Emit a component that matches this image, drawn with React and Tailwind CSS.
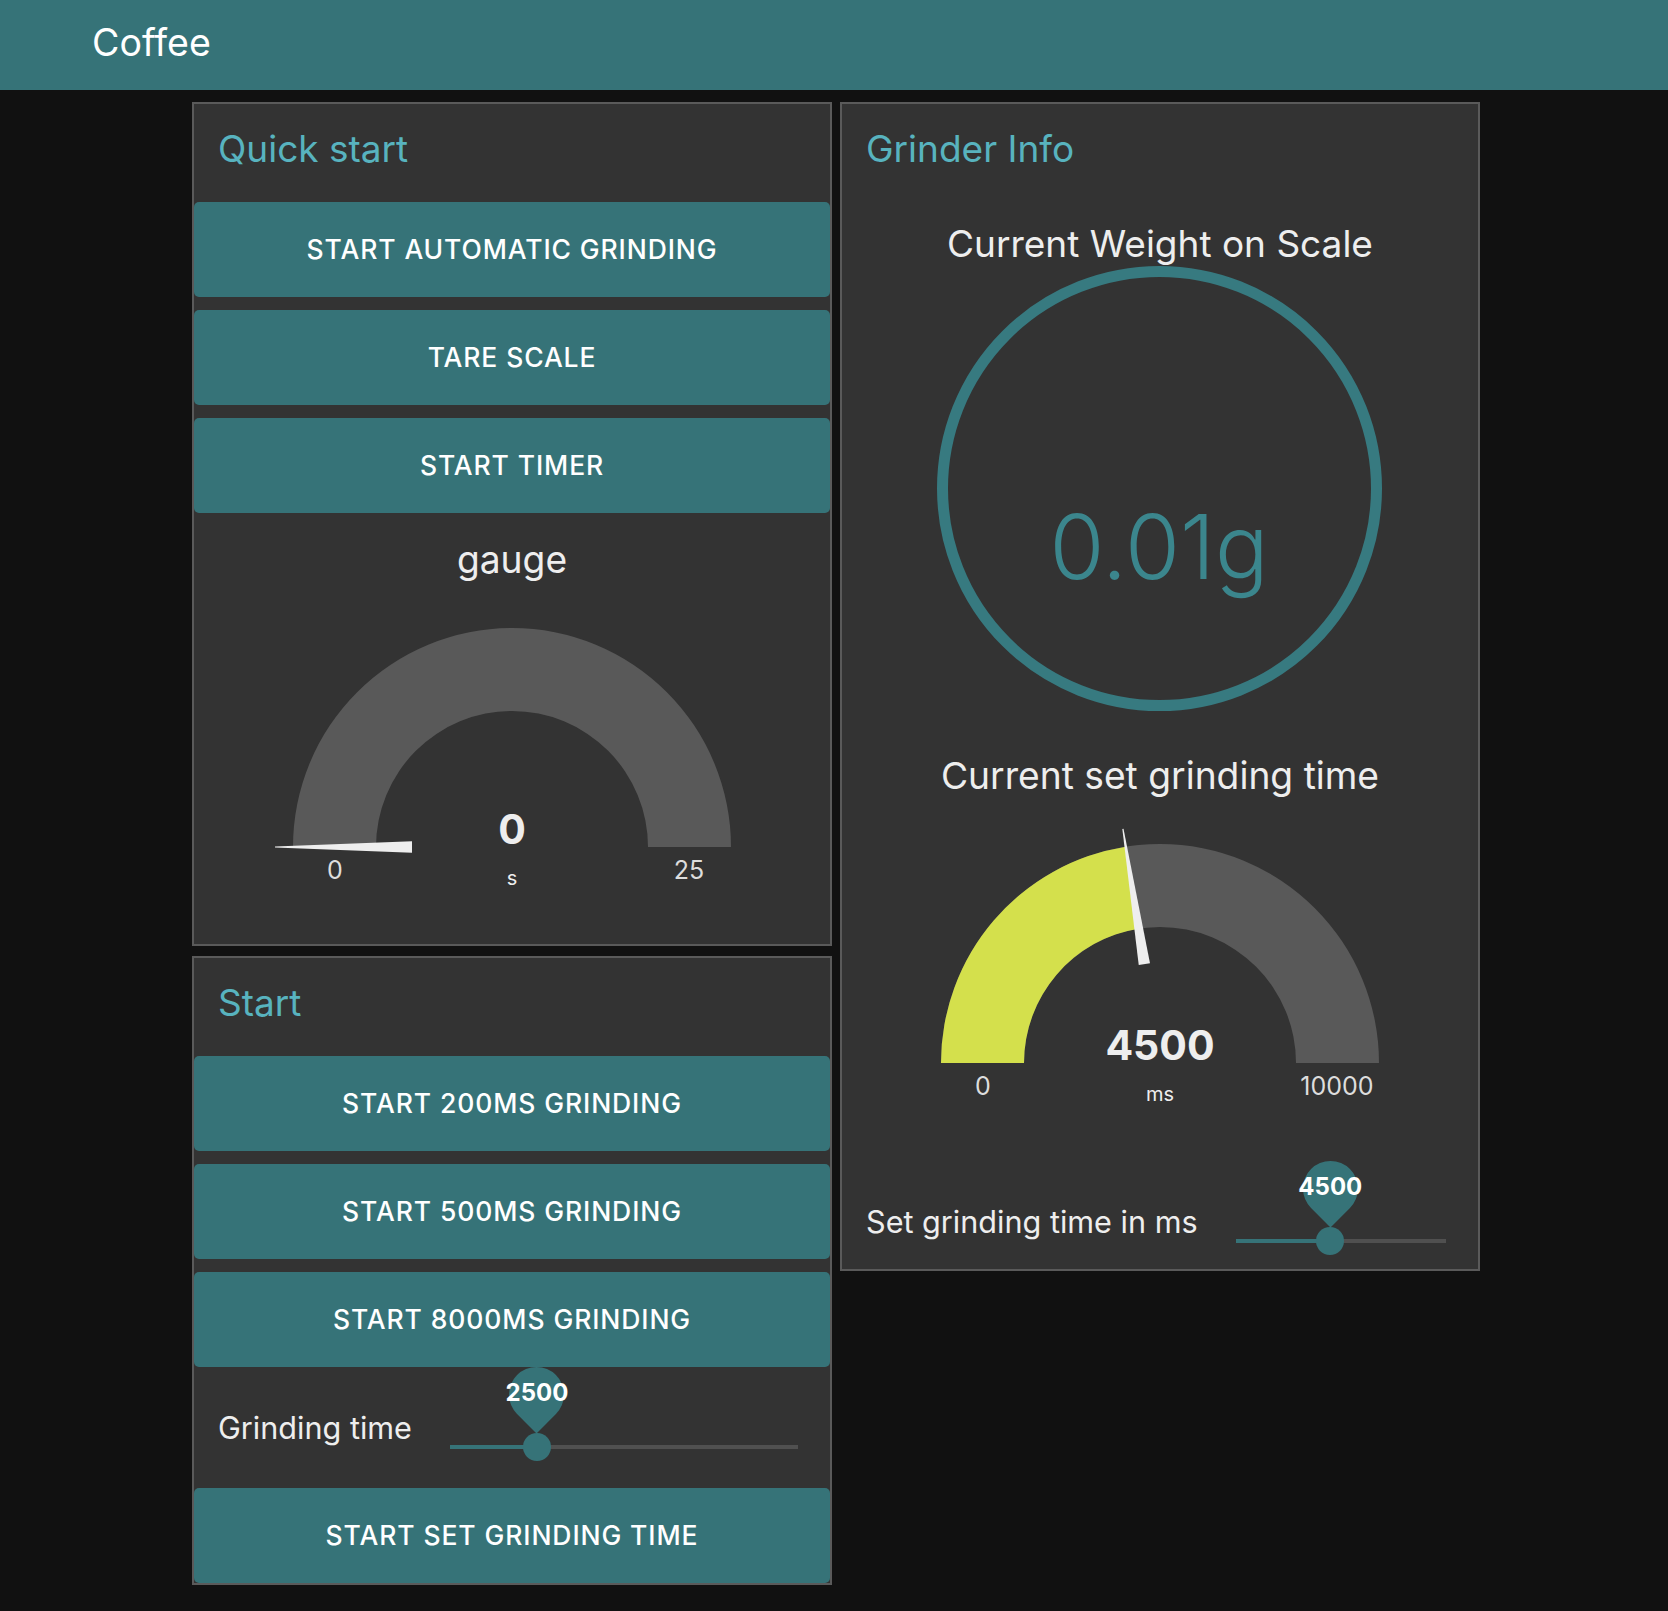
import React from 'react';

function Btn({ children }) {
  return (
    <div className="h-[95px] bg-[#367378] rounded-[5px] flex items-center justify-center text-white text-[26.5px] font-medium uppercase tracking-[0.9px]">
      {children}
    </div>
  );
}

function Title({ children }) {
  return (
    <div className="h-[98px] pl-[24px] pt-[25px] text-[37px] leading-[40px] text-[#58b3bf]">{children}</div>
  );
}

function Gauge({ title, value, min, max, unit, fill, titlePt, svgH, cy, blockH }) {
  const W = 636, cx = 318, R = 219, r = 136;
  const f = (value - min) / (max - min);
  const th = Math.PI * (1 - f);
  const ux = Math.cos(th), uy = -Math.sin(th);
  const nx = Math.sin(th), ny = Math.cos(th);
  const p = (d, w) => [cx + ux * d + nx * w, cy + uy * d + ny * w];
  const bg = `M ${cx - R} ${cy} A ${R} ${R} 0 0 1 ${cx + R} ${cy} L ${cx + r} ${cy} A ${r} ${r} 0 0 0 ${cx - r} ${cy} Z`;
  const ox = cx + R * ux, oy = cy + R * uy, ix = cx + r * ux, iy = cy + r * uy;
  const fg = `M ${cx - R} ${cy} A ${R} ${R} 0 0 1 ${ox} ${oy} L ${ix} ${iy} A ${r} ${r} 0 0 0 ${cx - r} ${cy} Z`;
  const a = p(237, 0.6), b = p(237, -0.6), c = p(100, -5.7), d = p(100, 5.7);
  const needle = `M ${a[0]} ${a[1]} L ${b[0]} ${b[1]} L ${c[0]} ${c[1]} L ${d[0]} ${d[1]} Z`;
  return (
    <div className="flex flex-col" style={{ height: blockH }}>
      <div className="text-center text-[37.2px] leading-[40px] text-[#eeeeee]" style={{ paddingTop: titlePt }}>{title}</div>
      <svg width={W} height={svgH} viewBox={`0 0 ${W} ${svgH}`}>
        <path d={bg} fill="#595959" />
        {f > 0 && <path d={fg} fill={fill} />}
        <path d={needle} fill="#eeeeee" />
        <text x={cx} y={cy - 3} textAnchor="middle" className="text-[41px] font-bold fill-[#eeeeee]">{value}</text>
        <text x={cx} y={cy + 38} textAnchor="middle" className="text-[20px] fill-[#eeeeee]">{unit}</text>
        <text x={cx - 177} y={cy + 32} textAnchor="middle" className="text-[25px] fill-[#dddddd]">{min}</text>
        <text x={cx + 177} y={cy + 32} textAnchor="middle" className="text-[25px] fill-[#dddddd]">{max}</text>
      </svg>
    </div>
  );
}

function Slider({ value, min, max }) {
  const pct = ((value - min) / (max - min)) * 100;
  return (
    <div className="relative flex-1 h-[28px]">
      <div className="mt-[12px] h-[4px] flex">
        <div className="h-full bg-[#367378]" style={{ width: pct + '%' }} />
        <div className="h-full flex-1 bg-[#505050]" />
      </div>
      <div className="absolute top-0 w-[28px] h-[28px] -ml-[14px] rounded-full bg-[#367378]" style={{ left: pct + '%' }} />
      <div className="absolute top-[-66px] w-[55px] h-[55px] -ml-[27.5px] rotate-45 rounded-[50%_50%_0_50%] bg-[#367378]" style={{ left: pct + '%' }} />
      <div className="absolute top-[-56px] w-[90px] -ml-[45px] text-center text-[24px] font-bold leading-[32px] text-white" style={{ left: pct + '%' }}>{value}</div>
    </div>
  );
}

export default function App() {
  return (
    <div className="min-h-screen bg-[#111111] [font-family:Inter,sans-serif]">
      <div className="h-[90px] bg-[#367378] pl-[92px] pt-[20px]">
        <div className="text-[37.5px] leading-[45px] text-white">Coffee</div>
      </div>
      <div className="flex items-start gap-[8px] pl-[192px] pt-[12px] pb-[26px]">
        <div className="flex flex-col gap-[10px]">
          <div className="w-[640px] bg-[#333333] border-2 border-[#5a5a5a] flex flex-col">
            <Title>Quick start</Title>
            <div className="flex flex-col gap-[13px]">
              <Btn>Start automatic grinding</Btn>
              <Btn>Tare scale</Btn>
              <Btn>Start timer</Btn>
            </div>
            <Gauge title="gauge" value={0} min={0} max={25} unit="s" fill="#d4e04c" titlePt={27} svgH={364} cy={267} blockH={431} />
          </div>
          <div className="w-[640px] bg-[#333333] border-2 border-[#5a5a5a] flex flex-col">
            <Title>Start</Title>
            <div className="flex flex-col gap-[13px]">
              <Btn>Start 200ms grinding</Btn>
              <Btn>Start 500ms grinding</Btn>
              <Btn>Start 8000ms grinding</Btn>
            </div>
            <div className="h-[121px] flex items-start pl-[24px] pr-[32px]">
              <div className="mt-[43px] text-[30.6px] leading-[36px] text-[#eeeeee]">Grinding time</div>
              <div className="flex-1 flex ml-[38px] mt-[66px]">
                <Slider value={2500} min={0} max={10000} />
              </div>
            </div>
            <Btn>Start set grinding time</Btn>
          </div>
        </div>
        <div className="w-[640px] bg-[#333333] border-2 border-[#5a5a5a] flex flex-col">
          <Title>Grinder Info</Title>
          <div className="h-[538px] flex flex-col">
            <div className="pt-[22px] text-center text-[37px] leading-[40px] text-[#eeeeee]">Current Weight on Scale</div>
            <svg width={636} height={476} viewBox="0 0 636 476">
              <circle cx={317.5} cy={224.5} r={217} fill="none" stroke="#377a80" strokeWidth={11} />
              <text x={317} y={315} textAnchor="middle" className="text-[89px] font-light fill-[#3b868d]">0.01g</text>
            </svg>
          </div>
          <Gauge title="Current set grinding time" value={4500} min={0} max={10000} unit="ms" fill="#d4e04c" titlePt={16} svgH={344} cy={267} blockH={400} />
          <div className="h-[129px] flex items-start pl-[24px] pr-[32px]">
            <div className="mt-[64px] text-[30.6px] leading-[36px] text-[#eeeeee]">Set grinding time in ms</div>
            <div className="flex-1 flex ml-[38px] mt-[87px]">
              <Slider value={4500} min={0} max={10000} />
            </div>
          </div>
        </div>
      </div>
    </div>
  );
}
